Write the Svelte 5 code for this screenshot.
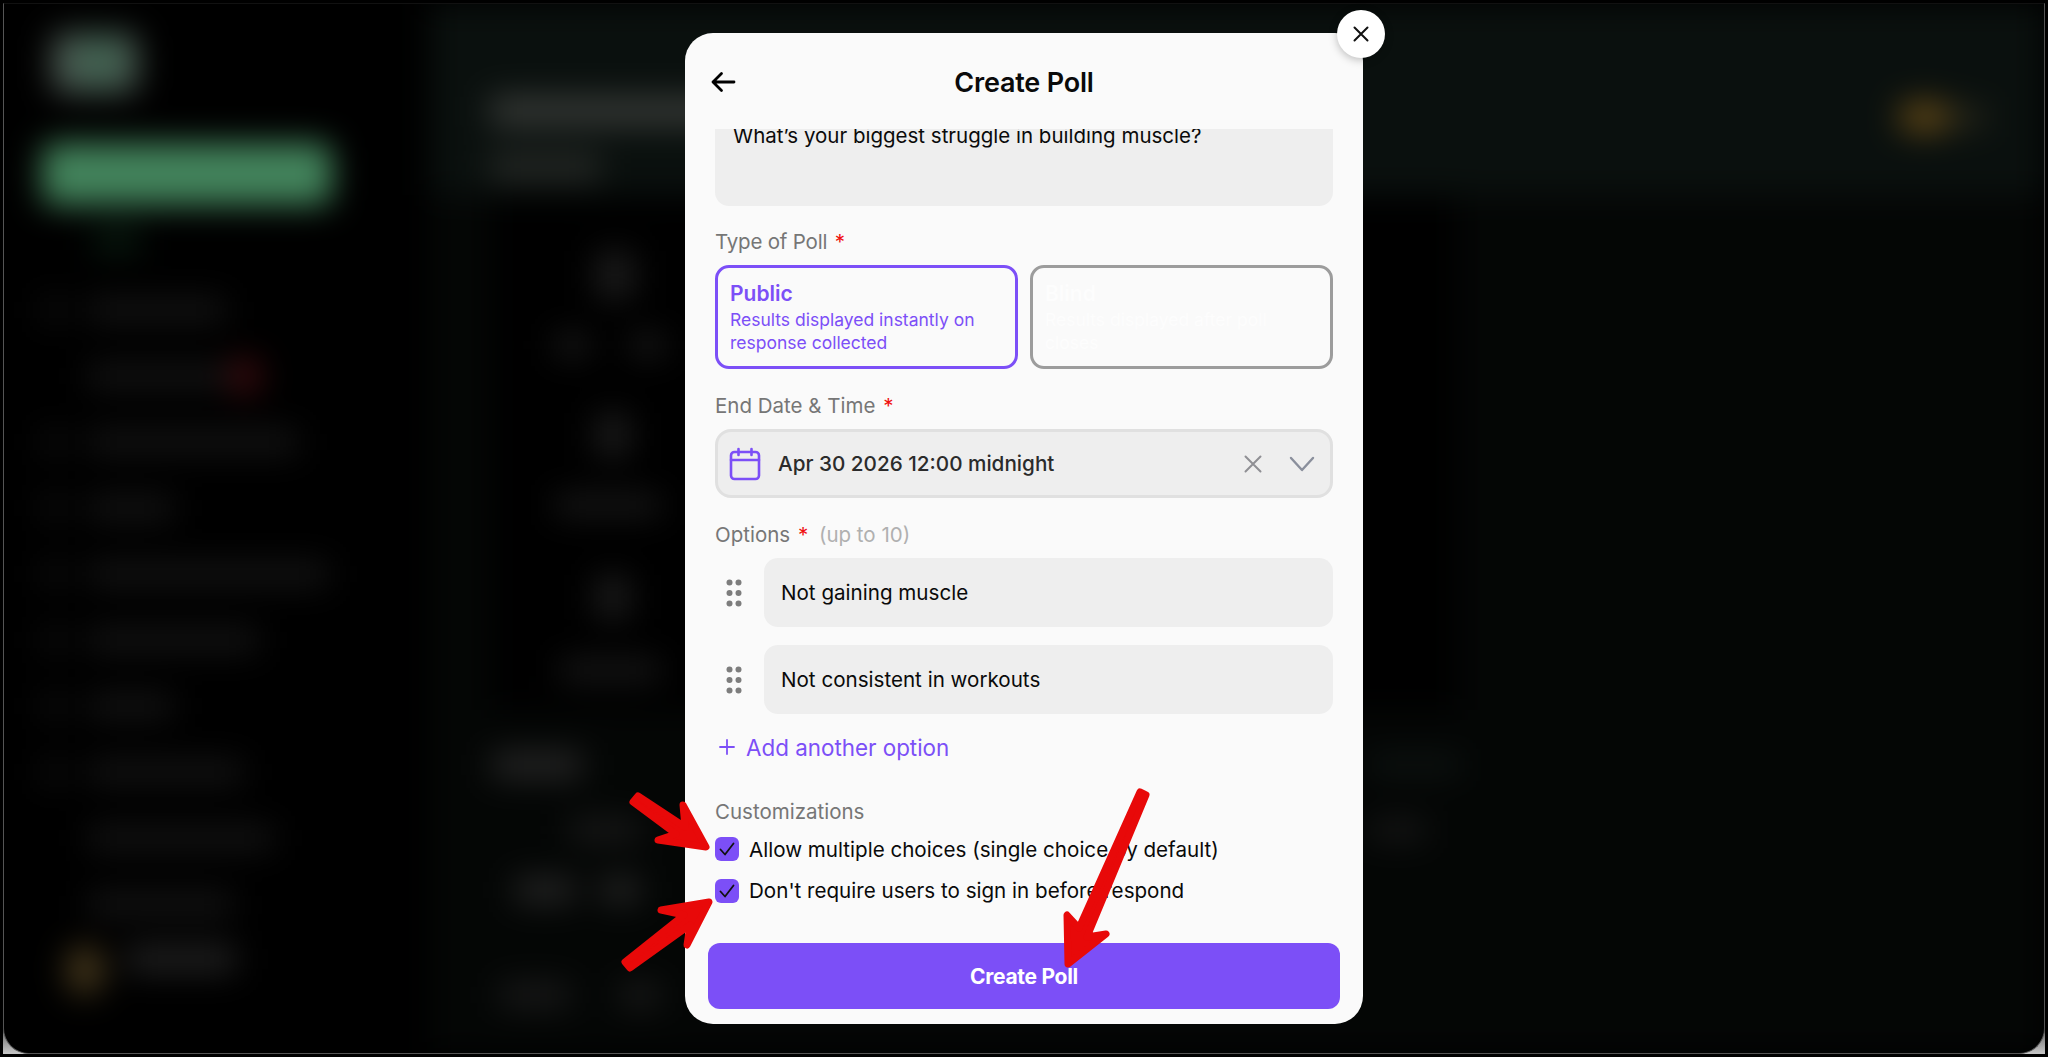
<script>
	// blurred page behind the modal, widths in px
	const navRows = [
		{ icon: true, width: 137 },
		{ icon: false, width: 140, dot: true },
		{ icon: true, width: 210 },
		{ icon: true, width: 85 },
		{ icon: true, width: 240 },
		{ icon: true, width: 170 },
		{ icon: true, width: 85 },
		{ icon: true, width: 155 },
		{ icon: false, width: 185 },
		{ icon: false, width: 145 }
	];

	const cardRows = [
		{ gap: 50, bars: [{ left: 103, width: 40, height: 48 }] },
		{ gap: 10, bars: [{ left: 63, width: 35, height: 22 }, { left: 40, width: 35, height: 22 }] },
		{ gap: 30, bars: [{ left: 103, width: 35, height: 44 }] },
		{ gap: 10, bars: [{ left: 63, width: 105, height: 20 }] },
		{ gap: 32, bars: [{ left: 103, width: 35, height: 44 }] },
		{ gap: 13, bars: [{ left: 68, width: 100, height: 20 }] }
	];

	const lowerRows = [
		{ gap: 25, bars: [{ left: 0, width: 90, height: 26, strong: true }, { left: 788, width: 90, height: 16, teal: true }] },
		{ gap: 5, bars: [{ left: 78, width: 70, height: 22 }, { left: 730, width: 55, height: 18 }] },
		{ gap: 0, bars: [{ left: 23, width: 60, height: 24, strong: true }, { left: 25, width: 40, height: 24, strong: true }] },
		{ gap: 45, bars: [{ left: 8, width: 70, height: 24 }, { left: 50, width: 40, height: 24 }] }
	];

	const options = ['Not gaining muscle', 'Not consistent in workouts'];
	const customizations = [
		'Allow multiple choices (single choice by default)',
		"Don't require users to sign in before respond"
	];
</script>

{#snippet blobRow(row)}
	<div class="main-row" style="margin-top:{row.gap}px">
		{#each row.bars as bar}
			<span class="blob" class:strong={bar.strong} class:teal={bar.teal} style="margin-left:{bar.left}px;width:{bar.width}px;height:{bar.height}px"></span>
		{/each}
	</div>
{/snippet}

<div class="screen">
	<div class="shell">
		<div class="frame">
			<div class="backdrop">
				<aside class="sidebar">
					<div class="logo"></div>
					<div class="new-btn"></div>
					<div class="new-sub"></div>
					<div class="nav">
						{#each navRows as row}
							<div class="nav-row">
								{#if row.icon}<span class="nav-icon"></span>{:else}<span class="nav-gap"></span>{/if}
								<span class="nav-bar" style="width:{row.width}px"></span>
								{#if row.dot}<span class="nav-dot"></span>{/if}
							</div>
						{/each}
					</div>
					<div class="user-row">
						<span class="avatar"></span>
						<span class="user-name"></span>
					</div>
				</aside>
				<main class="main">
					<header class="top">
						<div class="top-text">
							<div class="page-title"></div>
							<div class="page-sub"></div>
						</div>
						<div class="coins"><span class="coin"></span><span class="coin-num"></span></div>
					</header>
					<div class="content">
						<div class="card">
							{#each cardRows as row}
								{@render blobRow(row)}
							{/each}
						</div>
						{#each lowerRows as row}
							{@render blobRow(row)}
						{/each}
					</div>
				</main>
			</div>
		</div>
	</div>

	<div class="modal">
		<button class="close" aria-label="Close">
			<svg width="20" height="20" viewBox="0 0 20 20" fill="none" stroke="#111" stroke-width="2" stroke-linecap="round"><path d="M3.5 3.5l13 13M16.5 3.5l-13 13"/></svg>
		</button>

		<div class="modal-head">
			<button class="back" aria-label="Back">
				<svg width="26" height="22" viewBox="0 0 26 22" fill="none" stroke="#000" stroke-width="2.8" stroke-linecap="round" stroke-linejoin="round"><path d="M24 11H3M11.5 2.5L3 11l8.5 8.5"/></svg>
			</button>
			<h1>Create Poll</h1>
		</div>

		<div class="modal-body">
			<div class="question">What’s your biggest struggle in building muscle?</div>

			<div class="label first">Type of Poll <span class="req">*</span></div>
			<div class="types">
				<div class="type active">
					<b>Public</b>
					<p>Results displayed instantly on response collected</p>
				</div>
				<div class="type">
					<b>Blind</b>
					<p>Results displayed after poll closes</p>
				</div>
			</div>

			<div class="label">End Date &amp; Time <span class="req">*</span></div>
			<div class="date">
				<svg class="cal" width="32" height="34" viewBox="0 0 32 34" fill="none" stroke="#7c4ff7" stroke-width="2.6" stroke-linecap="round" stroke-linejoin="round">
					<rect x="2" y="5" width="28" height="27" rx="3.5"/>
					<path d="M2 13h28M9.5 2v6M22.5 2v6"/>
				</svg>
				<span class="date-text">Apr 30 2026 12:00 midnight</span>
				<svg class="date-x" width="18" height="18" viewBox="0 0 18 18" fill="none" stroke="#8f8f94" stroke-width="2" stroke-linecap="round"><path d="M1.5 1.5l15 15M16.5 1.5l-15 15"/></svg>
				<svg class="date-chev" width="26" height="16" viewBox="0 0 26 16" fill="none" stroke="#8a8f9c" stroke-width="2.4" stroke-linecap="round" stroke-linejoin="round"><path d="M2 2l11 12L24 2"/></svg>
			</div>

			<div class="label">Options <span class="req">*</span> <span class="hint">(up to 10)</span></div>
			<div class="options">
				{#each options as option}
					<div class="option">
						<svg class="grip" width="16" height="28" viewBox="0 0 16 28" fill="#7d7d7d">
							<circle cx="3.5" cy="3.5" r="3"/><circle cx="12.5" cy="3.5" r="3"/>
							<circle cx="3.5" cy="14" r="3"/><circle cx="12.5" cy="14" r="3"/>
							<circle cx="3.5" cy="24.5" r="3"/><circle cx="12.5" cy="24.5" r="3"/>
						</svg>
						<div class="option-input">{option}</div>
					</div>
				{/each}
			</div>

			<div class="add">
				<svg width="16" height="16" viewBox="0 0 16 16" fill="none" stroke="#7c4ff7" stroke-width="1.8" stroke-linecap="round"><path d="M8 1v14M1 8h14"/></svg>
				<span>Add another option</span>
			</div>

			<div class="label custom">Customizations</div>
			<div class="checks">
				{#each customizations as text}
					<div class="check">
						<span class="box">
							<svg width="16" height="14" viewBox="0 0 16 14" fill="none" stroke="#111" stroke-width="1.8" stroke-linecap="round" stroke-linejoin="round"><path d="M1.5 7.5l4.5 5L14.5 1.5"/></svg>
						</span>
						<span class="check-text">{text}</span>
					</div>
				{/each}
			</div>
		</div>

		<div class="modal-foot">
			<button class="create">Create Poll</button>
		</div>
	</div>

	<!-- red annotation arrows drawn over the screenshot -->
	<svg class="arrows" width="2048" height="1057" viewBox="0 0 2048 1057" fill="#e80909" stroke="#e80909" stroke-width="7" stroke-linejoin="round">
		<path d="M638 796L685 827L683 805L706 847L658 840L676 834L633 802Z"/>
		<path d="M625 962L684 915L661 910L709 902L687 945L690 925L630 968Z"/>
		<path d="M1140 792L1079 928L1067 915L1068 964L1106 934L1087 937L1146 795Z"/>
	</svg>
</div>

<style>
	:global(body) {
		margin: 0;
		background: #000;
	}

	* {
		box-sizing: border-box;
		font-family: Inter, "Liberation Sans", sans-serif;
	}

	.screen {
		position: relative;
		width: 2048px;
		height: 1057px;
		padding: 3px;
		overflow: hidden;
		background: #000;
	}

	.shell {
		height: 100%;
		background: linear-gradient(to bottom, #000 1000px, #c4c4c4 1050px);
	}

	.frame {
		height: 100%;
		border: 1px solid #555;
		border-top-color: #111;
		border-radius: 0 0 26px 26px;
		overflow: hidden;
		background: #000;
	}

	.backdrop {
		display: flex;
		height: 100%;
		filter: blur(16px);
	}

	.sidebar {
		display: flex;
		flex-direction: column;
		flex: 0 0 426px;
		padding: 29px 0 0 38px;
		background: #000;
	}

	.logo {
		width: 86px;
		height: 60px;
		margin-left: 10px;
		border-radius: 10px;
		background: radial-gradient(circle at 55% 45%, #3c6650, #505050);
	}

	.new-btn {
		width: 290px;
		height: 62px;
		margin-top: 50px;
		border-radius: 12px;
		background: #43845c;
	}

	.new-sub {
		width: 46px;
		height: 26px;
		margin: 22px 0 0 52px;
		background: #081a0f;
	}

	.nav {
		margin-top: 24px;
	}

	.nav-row {
		display: flex;
		align-items: center;
		gap: 22px;
		height: 66px;
	}

	.nav-icon, .nav-gap {
		flex: none;
		width: 24px;
		height: 24px;
		background: #101010;
	}

	.nav-gap {
		background: transparent;
	}

	.nav-bar {
		height: 24px;
		background: #141414;
	}

	.nav-dot {
		width: 34px;
		height: 40px;
		border-radius: 50%;
		margin-left: -22px;
		background: #380a0d;
	}

	.user-row {
		display: flex;
		align-items: center;
		gap: 22px;
		margin: 8px 0 0 24px;
	}

	.avatar {
		width: 38px;
		height: 50px;
		border-radius: 50%;
		background: #46381c;
	}

	.user-name {
		width: 110px;
		height: 26px;
		margin-top: -22px;
		background: #222;
	}

	.main {
		flex: 1;
		display: flex;
		flex-direction: column;
		background: #040605;
	}

	.top {
		display: flex;
		justify-content: space-between;
		flex: 0 0 191px;
		padding: 92px 58px 0 60px;
		background: #0a100e;
	}

	.page-title {
		width: 300px;
		height: 30px;
		background: #353835;
	}

	.page-sub {
		width: 110px;
		height: 26px;
		margin-top: 28px;
		background: #262926;
	}

	.coins {
		display: flex;
		align-items: center;
		height: 30px;
		margin-top: 6px;
	}

	.coin {
		width: 52px;
		height: 30px;
		border-radius: 15px;
		background: #604716;
	}

	.coin-num {
		width: 36px;
		height: 20px;
		background: #28281b;
	}

	.content {
		flex: 1;
		margin-left: 62px;
	}

	.card {
		width: 965px;
		height: 515px;
		background: #000;
		overflow: hidden;
	}

	.main-row {
		display: flex;
		align-items: center;
		height: 60px;
	}

	.blob {
		flex: none;
		background: #1a1a1a;
	}

	.blob.strong {
		background: #262626;
	}

	.blob.teal {
		background: #101715;
	}

	.modal {
		position: absolute;
		left: 685px;
		top: 33px;
		display: flex;
		flex-direction: column;
		width: 678px;
		height: 991px;
		border-radius: 28px;
		background: #fafafa;
	}

	.close {
		position: absolute;
		top: -23px;
		right: -22px;
		display: flex;
		align-items: center;
		justify-content: center;
		width: 48px;
		height: 48px;
		padding: 0;
		border: none;
		border-radius: 50%;
		background: #fff;
		box-shadow: 0 2px 8px rgba(0, 0, 0, 0.25);
	}

	.modal-head {
		position: relative;
		display: flex;
		align-items: center;
		justify-content: center;
		flex: 0 0 96px;
		padding-top: 2px;
	}

	.modal-head h1 {
		margin: 0;
		font-size: 27px;
		font-weight: 600;
		letter-spacing: -0.2px;
		color: #0a0a0a;
	}

	.back {
		position: absolute;
		left: 25px;
		top: 38px;
		padding: 0;
		border: none;
		background: none;
		line-height: 0;
	}

	.modal-body {
		flex: 1;
		padding: 0 30px;
		overflow: hidden;
	}

	.question {
		height: 97px;
		margin-top: -20px;
		padding: 14px 18px;
		border-radius: 14px;
		background: #eee;
		font-size: 20.5px;
		line-height: 26px;
		color: #0a0a0a;
	}

	.label {
		height: 24px;
		margin: 25px 0 11px;
		font-size: 20.5px;
		line-height: 24px;
		color: #767676;
	}

	.label.first {
		margin-top: 24px;
		letter-spacing: -0.2px;
	}

	.label.custom {
		margin: 41px 0 13px;
	}

	.req {
		margin-left: 2px;
		color: #f01010;
	}

	.hint {
		margin-left: 5px;
		color: #b0b0b0;
	}

	.types {
		display: grid;
		grid-template-columns: 1fr 1fr;
		gap: 12px;
	}

	.type {
		height: 104px;
		padding: 14px 12px;
		border: 3px solid #9c9c9c;
		border-radius: 14px;
		color: #fdfdfd;
	}

	.type.active {
		border-color: #7c4ff7;
		color: #7c4ff7;
	}

	.type b {
		display: block;
		font-size: 21px;
		line-height: 24px;
		font-weight: 600;
	}

	.type p {
		margin: 2px 0 0;
		font-size: 17.5px;
		line-height: 23px;
	}

	.date {
		display: flex;
		align-items: center;
		height: 69px;
		padding: 0 15px 0 11px;
		border: 3px solid #e0e0e0;
		border-radius: 16px;
		background: #eee;
	}

	.date-text {
		flex: 1;
		margin-left: 17px;
		font-size: 20.7px;
		font-weight: 500;
		color: #2b2b2b;
	}

	.date-chev {
		margin-left: 27px;
	}

	.options {
		display: flex;
		flex-direction: column;
		gap: 18px;
	}

	.option {
		display: flex;
		align-items: center;
	}

	.grip {
		flex: none;
		margin: 0 0 0 11px;
	}

	.option-input {
		flex: 1;
		height: 69px;
		margin-left: 22px;
		padding-left: 17px;
		border-radius: 14px;
		background: #eee;
		font-size: 20.6px;
		line-height: 69px;
		color: #0a0a0a;
	}

	.add {
		display: flex;
		align-items: center;
		gap: 11px;
		height: 24px;
		margin: 21px 0 0 4px;
		font-size: 22.4px;
		color: #7c4ff7;
	}

	.checks {
		display: flex;
		flex-direction: column;
		gap: 18px;
	}

	.check {
		display: flex;
		align-items: center;
		gap: 10px;
		height: 24px;
		font-size: 20.6px;
		color: #0a0a0a;
	}

	.check:last-child .check-text {
		margin-top: -2px;
	}

	.box {
		display: flex;
		align-items: center;
		justify-content: center;
		width: 24px;
		height: 24px;
		border-radius: 6px;
		background: #7c4ff7;
	}

	.modal-foot {
		padding: 0 23px 15px;
	}

	.create {
		width: 100%;
		height: 66px;
		border: none;
		border-radius: 12px;
		background: #7c4ff7;
		color: #fff;
		font-size: 21px;
		font-weight: 700;
		letter-spacing: -0.3px;
	}

	.arrows {
		position: absolute;
		left: 0;
		top: 0;
		pointer-events: none;
	}
</style>
